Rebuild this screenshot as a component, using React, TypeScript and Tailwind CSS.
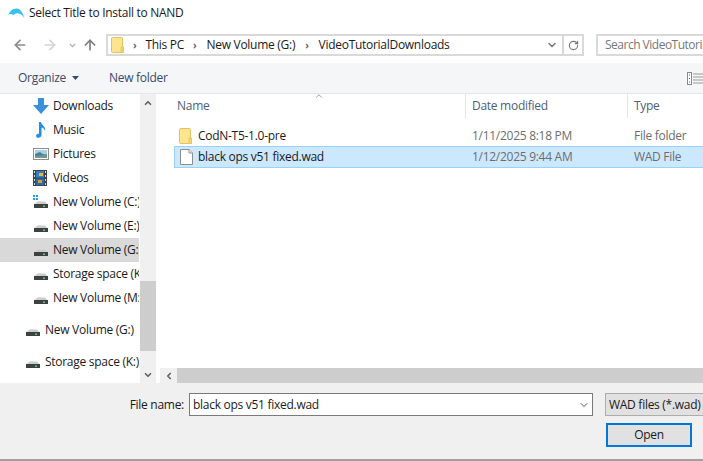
import { ChevronDown, ChevronUp, ChevronLeft, ArrowLeft, ArrowRight, ArrowUp, RotateCw } from "lucide-react";

const font = "font-['Open_Sans','Noto_Sans',sans-serif]";

function Dolphin() {
  return (
    <svg width="16" height="11" viewBox="0 0 16 11" className="shrink-0">
      <path d="M0 7 C2 3 5 0 9 0.5 C12 1 15 4 16 10 C14.5 7.5 13 6 10.5 5.5 C8.5 5 6.5 5.5 5.5 7.5 C4.5 6 2 5.5 0 7 Z" fill="#35c3ee" />
    </svg>
  );
}

function FolderIcon() {
  return (
    <svg width="13" height="16" viewBox="0 0 13 16" className="shrink-0">
      <rect x="0.5" y="0.5" width="11" height="15" rx="1" fill="#fde58f" stroke="#e0c264" />
      <rect x="10" y="10" width="3" height="6" fill="#f3cf6c" stroke="#dcb95a" strokeWidth="0.5" />
    </svg>
  );
}

function FileIcon() {
  return (
    <svg width="13" height="16" viewBox="0 0 13 16" className="shrink-0">
      <path d="M0.5 0.5 H9 L12.5 4 V15.5 H0.5 Z" fill="#fff" stroke="#8e8e8e" />
      <path d="M9 0.5 V4 H12.5" fill="#eee" stroke="#8e8e8e" />
    </svg>
  );
}

function DownloadsIcon() {
  return (
    <svg width="16" height="16" viewBox="0 0 16 16">
      <path d="M5 0 H11 V7 H16 L8 16 L0 7 H5 Z" fill="#3b8fdc" />
    </svg>
  );
}

function MusicIcon() {
  return (
    <svg width="16" height="16" viewBox="0 0 16 16">
      <path d="M6 0 H8 C8 3 13 4 12 9 C11 6 9.5 6 8.5 5.5 V13 C8.5 15 6 16.5 4 15.5 C2.5 14.5 3 12.5 4.5 12 C5 11.7 5.5 11.6 6 11.7 Z" fill="#1e8ee6" />
    </svg>
  );
}

function PicturesIcon() {
  return (
    <svg width="16" height="12" viewBox="0 0 16 12">
      <rect x="0.5" y="0.5" width="15" height="11" fill="#fff" stroke="#8d8d8d" />
      <rect x="2" y="2" width="12" height="4" fill="#a7cfe6" />
      <rect x="2" y="6" width="12" height="4" fill="#6b9b8a" />
      <path d="M2 6 L7 4 L11 7 L2 8 Z" fill="#4d7d96" />
    </svg>
  );
}

function VideosIcon() {
  return (
    <svg width="14" height="16" viewBox="0 0 14 16">
      <rect width="14" height="16" fill="#3d4450" />
      <rect x="3" y="1" width="8" height="6.5" fill="#2f7fc6" />
      <rect x="3" y="8.5" width="8" height="6.5" fill="#2a6ba8" />
      <rect x="6" y="3" width="4" height="3" fill="#e5b73b" />
      <rect x="5" y="10" width="4" height="3" fill="#d8a12f" />
      <path d="M1 1 H2 V3 H1 Z M1 5 H2 V7 H1 Z M1 9 H2 V11 H1 Z M1 13 H2 V15 H1 Z M12 1 H13 V3 H12 Z M12 5 H13 V7 H12 Z M12 9 H13 V11 H12 Z M12 13 H13 V15 H12 Z" fill="#d5d9de" />
    </svg>
  );
}

function DriveIcon({ windows = false }: { windows?: boolean }) {
  return (
    <svg width="16" height="16" viewBox="0 0 16 16">
      {windows && <path d="M0 1 H2 V3 H0 Z M3 1 H5 V3 H3 Z M0 4 H2 V6 H0 Z M3 4 H5 V6 H3 Z" fill="#1fa3e8" />}
      <path d="M2 10 L4 7.5 H12 L14 10 Z" fill="#c9cdd0" />
      <rect x="1" y="10" width="14" height="4" fill="#3d4144" />
      <rect x="10" y="11.5" width="2" height="1.5" fill="#5ad05a" />
    </svg>
  );
}

const navItems = [
  { icon: <DownloadsIcon />, label: "Downloads" },
  { icon: <MusicIcon />, label: "Music" },
  { icon: <PicturesIcon />, label: "Pictures" },
  { icon: <VideosIcon />, label: "Videos" },
  { icon: <DriveIcon windows />, label: "New Volume (C:)" },
  { icon: <DriveIcon />, label: "New Volume (E:)" },
  { icon: <DriveIcon />, label: "New Volume (G:)", active: true },
  { icon: <DriveIcon />, label: "Storage space (K:)" },
  { icon: <DriveIcon />, label: "New Volume (M:)" },
];

export default function App() {
  return (
    <div className={`w-[703px] h-[461px] overflow-hidden bg-white flex flex-col text-[12px] tracking-[-0.28px] text-[#1a1a1a] ${font}`}>
      {/* title bar */}
      <div className="h-[26px] flex items-center pl-[8px] gap-[5px] shrink-0">
        <Dolphin />
        <span className="whitespace-nowrap">Select Title to Install to NAND</span>
      </div>

      {/* address row */}
      <div className="h-[37px] flex items-start pt-[8px] shrink-0">
        <div className="w-[106px] pl-[12px] h-[22px] flex items-center shrink-0">
          <ArrowLeft size={16} strokeWidth={2.5} className="text-[#8a8a8a]" />
          <ArrowRight size={16} strokeWidth={2.5} className="text-[#d4d4d4] ml-[14px]" />
          <ChevronDown size={9} strokeWidth={3.5} className="text-[#a8a8a8] ml-[10px]" />
          <ArrowUp size={16} strokeWidth={2.5} className="text-[#7d7d7d] ml-[5px]" />
        </div>
        <div className="w-[478px] h-[22px] border-2 border-[#d9d9d9] flex items-center shrink-0">
          <div className="pl-[3px] pr-[9px] shrink-0"><FolderIcon /></div>
          <span className="text-[#666] text-[10px] font-bold mr-[9px]">›</span>
          <span>This PC</span>
          <span className="text-[#666] text-[10px] font-bold ml-[9px] mr-[10px]">›</span>
          <span>New Volume (G:)</span>
          <span className="text-[#666] text-[10px] font-bold ml-[10px] mr-[10px]">›</span>
          <span className="flex-1 whitespace-nowrap">VideoTutorialDownloads</span>
          <ChevronDown size={12} strokeWidth={3} className="text-[#777] mr-[4px]" />
          <div className="w-[20px] h-full border-l-2 border-[#d9d9d9] flex items-center justify-center">
            <RotateCw size={11} strokeWidth={2.5} className="text-[#777]" />
          </div>
        </div>
        <div className="ml-[12px] flex-1 h-[22px] border-2 border-r-0 border-[#d9d9d9] flex items-center pl-[7px] text-[#777] tracking-[-0.5px] overflow-hidden whitespace-nowrap">
          Search VideoTutori
        </div>
      </div>

      {/* toolbar */}
      <div className="h-[31px] bg-[#f5f6f7] border-b border-[#e5e5e5] flex items-center pl-[18px] shrink-0 text-[#3b4a6b]">
        <span>Organize</span>
        <svg width="7" height="4" viewBox="0 0 7 4" className="ml-[6px]"><path d="M0 0 H7 L3.5 4 Z" fill="#3b4a6b" /></svg>
        <span className="ml-[30px]">New folder</span>
        <svg width="16" height="13" viewBox="0 0 16 13" className="ml-auto">
          <rect x="0.5" y="0.5" width="4" height="12" fill="#fff" stroke="#8a8a8a" />
          <path d="M2 3 H3 M2 6.5 H3 M2 10 H3" stroke="#c0392b" />
          <path d="M6 2 H16 M6 5 H16 M6 8 H16 M6 11 H16" stroke="#9a9a9a" />
        </svg>
      </div>

      {/* main */}
      <div className="flex-1 min-h-0 flex">
        <div className="w-[139px] mr-[1px] shrink-0 overflow-hidden">
          {navItems.map((item) => (
            <div key={item.label} className={`h-[24px] flex items-center pl-[33px] ${item.active ? "bg-[#d9d9d9]" : ""}`}>
              <div className="w-[20px] shrink-0 flex items-center">{item.icon}</div>
              <span className="whitespace-nowrap">{item.label}</span>
            </div>
          ))}
          <div className="h-[8px]" />
          <div className="h-[24px] flex items-center pl-[25px]">
            <div className="w-[20px] shrink-0"><DriveIcon /></div>
            <span className="whitespace-nowrap">New Volume (G:)</span>
          </div>
          <div className="h-[8px]" />
          <div className="h-[24px] flex items-center pl-[25px]">
            <div className="w-[20px] shrink-0"><DriveIcon /></div>
            <span className="whitespace-nowrap">Storage space (K:)</span>
          </div>
        </div>
        <div className="w-[16px] shrink-0 bg-[#f0f0f0] flex flex-col items-center justify-between">
          <div className="h-[17px] flex items-center"><ChevronUp size={10} strokeWidth={4} className="text-[#606060]" /></div>
          <div className="flex-1 w-full relative">
            <div className="absolute left-0 right-0 top-[170px] h-[70px] bg-[#cdcdcd]" />
          </div>
          <div className="h-[17px] flex items-center"><ChevronDown size={10} strokeWidth={4} className="text-[#606060]" /></div>
        </div>

        <div className="flex-1 min-w-0 flex flex-col ml-[4px]">
          <div className="h-[24px] flex text-[#4c607a] relative shrink-0">
            <ChevronUp size={10} className="absolute left-[154px] top-[-3px] text-[#8a8a8a]" />
            <div className="w-[306px] pl-[17px] flex items-center border-r border-[#e5e5e5]">Name</div>
            <div className="w-[162px] pl-[6px] flex items-center border-r border-[#e5e5e5]">Date modified</div>
            <div className="flex-1 pl-[6px] flex items-center">Type</div>
          </div>
          <div className="h-[6px] shrink-0" />
          <div className="flex-1 pl-[14px]">
            <div className="h-[22px] flex items-center border border-transparent pt-[1px]">
              <div className="w-[297px] flex items-center pl-[4px] gap-[6px]">
                <FolderIcon />
                <span>CodN-T5-1.0-pre</span>
              </div>
              <div className="w-[162px] text-[#6d6d6d]">1/11/2025 8:18 PM</div>
              <div className="text-[#6d6d6d]">File folder</div>
            </div>
            <div className="h-[22px] flex items-center bg-[#cce8ff] border border-[#99d1ff] border-r-0">
              <div className="w-[297px] flex items-center pl-[5px] gap-[5px]">
                <FileIcon />
                <span>black ops v51 fixed.wad</span>
              </div>
              <div className="w-[162px] text-[#6d6d6d]">1/12/2025 9:44 AM</div>
              <div className="text-[#6d6d6d]">WAD File</div>
            </div>
          </div>
          <div className="h-[15px] bg-[#cdcdcd] flex shrink-0">
            <div className="w-[17px] bg-[#f0f0f0] flex items-center justify-center">
              <ChevronLeft size={10} strokeWidth={4} className="text-[#606060]" />
            </div>
          </div>
        </div>
      </div>

      {/* footer */}
      <div className="h-[78px] bg-[#f0f0f0] border-b-2 border-[#a0a0a0] flex flex-col shrink-0">
        <div className="flex items-center pt-[10px]">
          <span className="w-[184px] text-right whitespace-nowrap">File name:</span>
          <div className="ml-[5px] w-[404px] h-[23px] bg-white border border-[#7a7a7a] flex items-center pl-[3px] justify-between">
            <span>black ops v51 fixed.wad</span>
            <ChevronDown size={12} className="text-[#555] mr-[2px]" />
          </div>
          <div className="ml-[12px] flex-1 h-[23px] bg-[#e1e1e1] border border-[#adadad] border-r-0 flex items-center pl-[3px] whitespace-nowrap overflow-hidden">
            WAD files (*.wad)
          </div>
        </div>
        <button className="ml-[606px] mt-[7px] w-[86px] h-[24px] bg-[#e1e1e1] border-2 border-[#0078d7] flex items-center justify-center">
          Open
        </button>
      </div>
    </div>
  );
}
